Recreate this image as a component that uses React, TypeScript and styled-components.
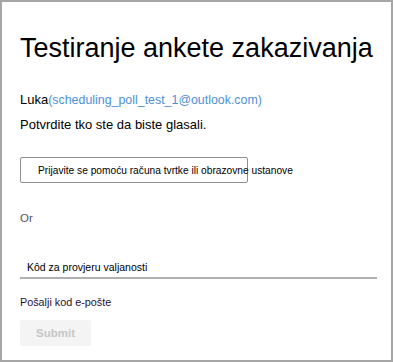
import React from "react";
import styled, { createGlobalStyle } from "styled-components";

const GlobalStyle = createGlobalStyle`
  html, body {
    margin: 0;
    padding: 0;
    background: #fff;
  }
  body {
    font-family: "Liberation Sans", Arial, sans-serif;
  }
`;

const Frame = styled.div`
  box-sizing: border-box;
  width: 393px;
  height: 362px;
  border: 2px solid #a6a6a6;
  background: #fff;
  padding: 29px 14px 0 18px;
  display: flex;
  flex-direction: column;
`;

const Title = styled.h1`
  margin: 0;
  font-size: 27px;
  font-weight: 400;
  line-height: 34px;
  color: #000;
  white-space: nowrap;
`;

const Who = styled.div`
  margin-top: 26px;
  font-size: 13px;
  line-height: 18px;
  color: #000;
`;

const Email = styled.span`
  font-size: 12.4px;
  color: #4f8fd6;
`;

const Hint = styled.p`
  margin: 7px 0 0;
  font-size: 13px;
  line-height: 18px;
  color: #000;
`;

const SignInButton = styled.button`
  box-sizing: border-box;
  margin-top: 23px;
  width: 228px;
  height: 26px;
  padding: 0 0 0 17px;
  border: 1px solid #8f8f8f;
  border-radius: 2px;
  background: #fff;
  font-family: inherit;
  font-size: 10.2px;
  color: #000;
  text-align: left;
  white-space: nowrap;
  overflow: visible;
`;

const Or = styled.div`
  margin-top: 27px;
  font-size: 11.5px;
  line-height: 16px;
  color: #555;
`;

const CodeField = styled.input`
  box-sizing: border-box;
  margin-top: 31px;
  width: 357px;
  height: 22px;
  padding: 0 0 0 7px;
  border: 0;
  border-bottom: 2px solid #b0b0b0;
  outline: none;
  background: transparent;
  font-family: inherit;
  font-size: 10.5px;
  color: #000;

  &::placeholder {
    color: #000;
  }
`;

const SendCode = styled.div`
  margin-top: 15px;
  font-size: 10.8px;
  line-height: 16px;
  color: #2b0f33;
`;

const SubmitButton = styled.button`
  box-sizing: border-box;
  margin-top: 10px;
  width: 71px;
  height: 26px;
  border: 0;
  border-radius: 2px;
  background: #f4f4f4;
  font-family: inherit;
  font-size: 11.5px;
  font-weight: 700;
  color: #c6c6c6;
`;

export default function App() {
  return (
    <>
      <GlobalStyle />
      <Frame>
        <Title>Testiranje ankete zakazivanja</Title>
        <Who>
          Luka<Email>(scheduling_poll_test_1@outlook.com)</Email>
        </Who>
        <Hint>Potvrdite tko ste da biste glasali.</Hint>
        <div>
          <SignInButton>Prijavite se pomoću računa tvrtke ili obrazovne ustanove</SignInButton>
        </div>
        <Or>Or</Or>
        <CodeField placeholder="Kôd za provjeru valjanosti" />
        <SendCode>Pošalji kod e-pošte</SendCode>
        <div>
          <SubmitButton disabled>Submit</SubmitButton>
        </div>
      </Frame>
    </>
  );
}
